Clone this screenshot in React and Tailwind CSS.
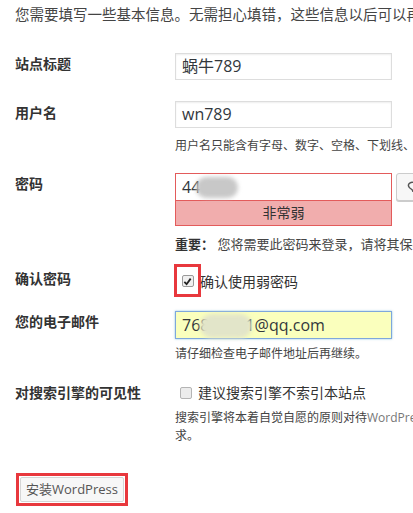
import React from 'react';

const font = { fontFamily: '"Open Sans", "Noto Sans CJK SC", sans-serif' };

// Label column on the left, 160px wide like the install form
const Label = ({ children, className = '' }) => (
  <div className={`w-[160px] shrink-0 text-[14px] font-bold leading-[20px] text-[#333] ${className}`}>
    {children}
  </div>
);

const TextInput = ({ value, className = '' }) => (
  <div className={`h-[27px] w-[217px] border border-[#ddd] bg-white px-[6px] text-[16px] leading-[25px] text-[#32373c] shadow-[inset_0_1px_2px_rgba(0,0,0,0.07)] ${className}`}>
    {value}
  </div>
);

export default function App() {
  return (
    <div className="relative h-[513px] w-[413px] overflow-hidden bg-white text-[#444]" style={font}>
      <div className="w-[600px] pl-[15px] pt-[5px]">
        <p className="whitespace-nowrap text-[14.5px] leading-[20px] text-[#444]">
          您需要填写一些基本信息。无需担心填错，这些信息以后可以再次修改。
        </p>

        {/* 站点标题 */}
        <div className="mt-[28px] flex">
          <Label className="pt-[1px]">站点标题</Label>
          <TextInput value="蜗牛789" />
        </div>

        {/* 用户名 */}
        <div className="mt-[21px] flex">
          <Label className="pt-[2px]">用户名</Label>
          <div>
            <TextInput value="wn789" />
            <p className="mt-[9px] whitespace-nowrap text-[12px] leading-[18px] text-[#444]">
              用户名只能含有字母、数字、空格、下划线、连字符、句号和“@”符号。
            </p>
          </div>
        </div>

        {/* 密码 */}
        <div className="mt-[18px] flex">
          <Label className="pt-[1px]">密码</Label>
          <div>
            <div className="flex items-start gap-[4px]">
              <div className="w-[217px]">
                <div className="relative h-[27px] border border-[#e35b5b] border-b-0 bg-white px-[6px] text-[16px] leading-[27px] text-[#32373c]">
                  44
                  <div className="absolute left-[20px] top-[3px] h-[21px] w-[42px] rounded-full bg-[#c8c8c8] blur-[2px]" />
                </div>
                <div className="h-[26px] border border-[#e35b5b] bg-[#f1adad] text-center text-[14px] leading-[24px] text-[#333]">
                  非常弱
                </div>
              </div>
              <div className="flex h-[28px] w-[40px] items-center rounded-[3px] border border-[#ccc] bg-[#f7f7f7] pl-[8px] shadow-[0_1px_0_#ccc]">
                <svg width="14" height="14" viewBox="0 0 14 14" fill="none" stroke="#555" strokeWidth="1.4">
                  <path d="M10 3 C6 1 2 4 4 7 C5 9 8 9 8 12" />
                </svg>
              </div>
            </div>
            <p className="mt-[9px] whitespace-nowrap text-[13px] leading-[18px] text-[#444]">
              <strong className="text-[#333]">重要：</strong> 您将需要此密码来登录，请将其保存在安全的位置。
            </p>
          </div>
        </div>

        {/* 确认密码 */}
        <div className="mt-[11px] flex items-center">
          <Label className="-mt-[3px]">确认密码</Label>
          <div className="flex items-center">
            <div className="-ml-[1px] flex h-[33px] w-[27px] items-center justify-center border-[3px] border-[#e8383d]">
              <div className="mt-[1px] flex h-[12px] w-[12px] items-center justify-center rounded-[2px] border border-[#9a9a9a] bg-[#f0f0f0]">
                <svg width="9" height="9" viewBox="0 0 10 10">
                  <path d="M1.5 5.5 L4 8 L8.5 1.8" fill="none" stroke="#222" strokeWidth="2" />
                </svg>
              </div>
            </div>
            <span className="-ml-[1px] mt-[3px] text-[14px] leading-[20px] text-[#333]">确认使用弱密码</span>
          </div>
        </div>

        {/* 您的电子邮件 */}
        <div className="mt-[14px] flex">
          <Label className="pt-[1px]">您的电子邮件</Label>
          <div>
            <div className="relative h-[28px] w-[217px] border border-[#7ea7dc] bg-[#faffbd] px-[6px] text-[16px] leading-[26px] text-[#32373c] shadow-[0_0_2px_rgba(30,140,190,0.5)]">
              768<span className="inline-block w-[36px]" />1@qq.com
              <div className="absolute left-[24px] top-[2px] h-[24px] w-[52px] rounded-[12px] bg-[#e2e5c9] blur-[2px]" />
            </div>
            <p className="mt-[6px] whitespace-nowrap text-[12px] leading-[18px] text-[#444]">
              请仔细检查电子邮件地址后再继续。
            </p>
          </div>
        </div>

        {/* 对搜索引擎的可见性 */}
        <div className="mt-[20px] flex">
          <Label>对搜索引擎的可见性</Label>
          <div>
            <div className="flex items-center pl-[5px]">
              <div className="h-[12px] w-[12px] rounded-[2px] border border-[#b4b4b4] bg-[#ececec]" />
              <span className="ml-[6px] text-[14px] leading-[20px] text-[#333]">建议搜索引擎不索引本站点</span>
            </div>
            <p className="mt-[6px] whitespace-nowrap text-[12px] leading-[18px] text-[#444]">
              搜索引擎将本着自觉自愿的原则对待<span className="text-[#777]">WordPress</span>提出的请求。并不是所有的搜索引擎都会遵守这类请
            </p>
            <p className="text-[12px] leading-[18px] text-[#444]">求。</p>
          </div>
        </div>

        {/* 安装按钮 */}
        <div className="ml-[1px] mt-[28px] inline-flex border-[3px] border-[#e8383d] p-[1px]">
          <div className="flex h-[25px] w-[104px] items-center justify-center rounded-[2px] border border-[#d5d5d5] bg-[#f7f7f7] text-[13px] text-[#555]">
            安装WordPress
          </div>
        </div>
      </div>
    </div>
  );
}
